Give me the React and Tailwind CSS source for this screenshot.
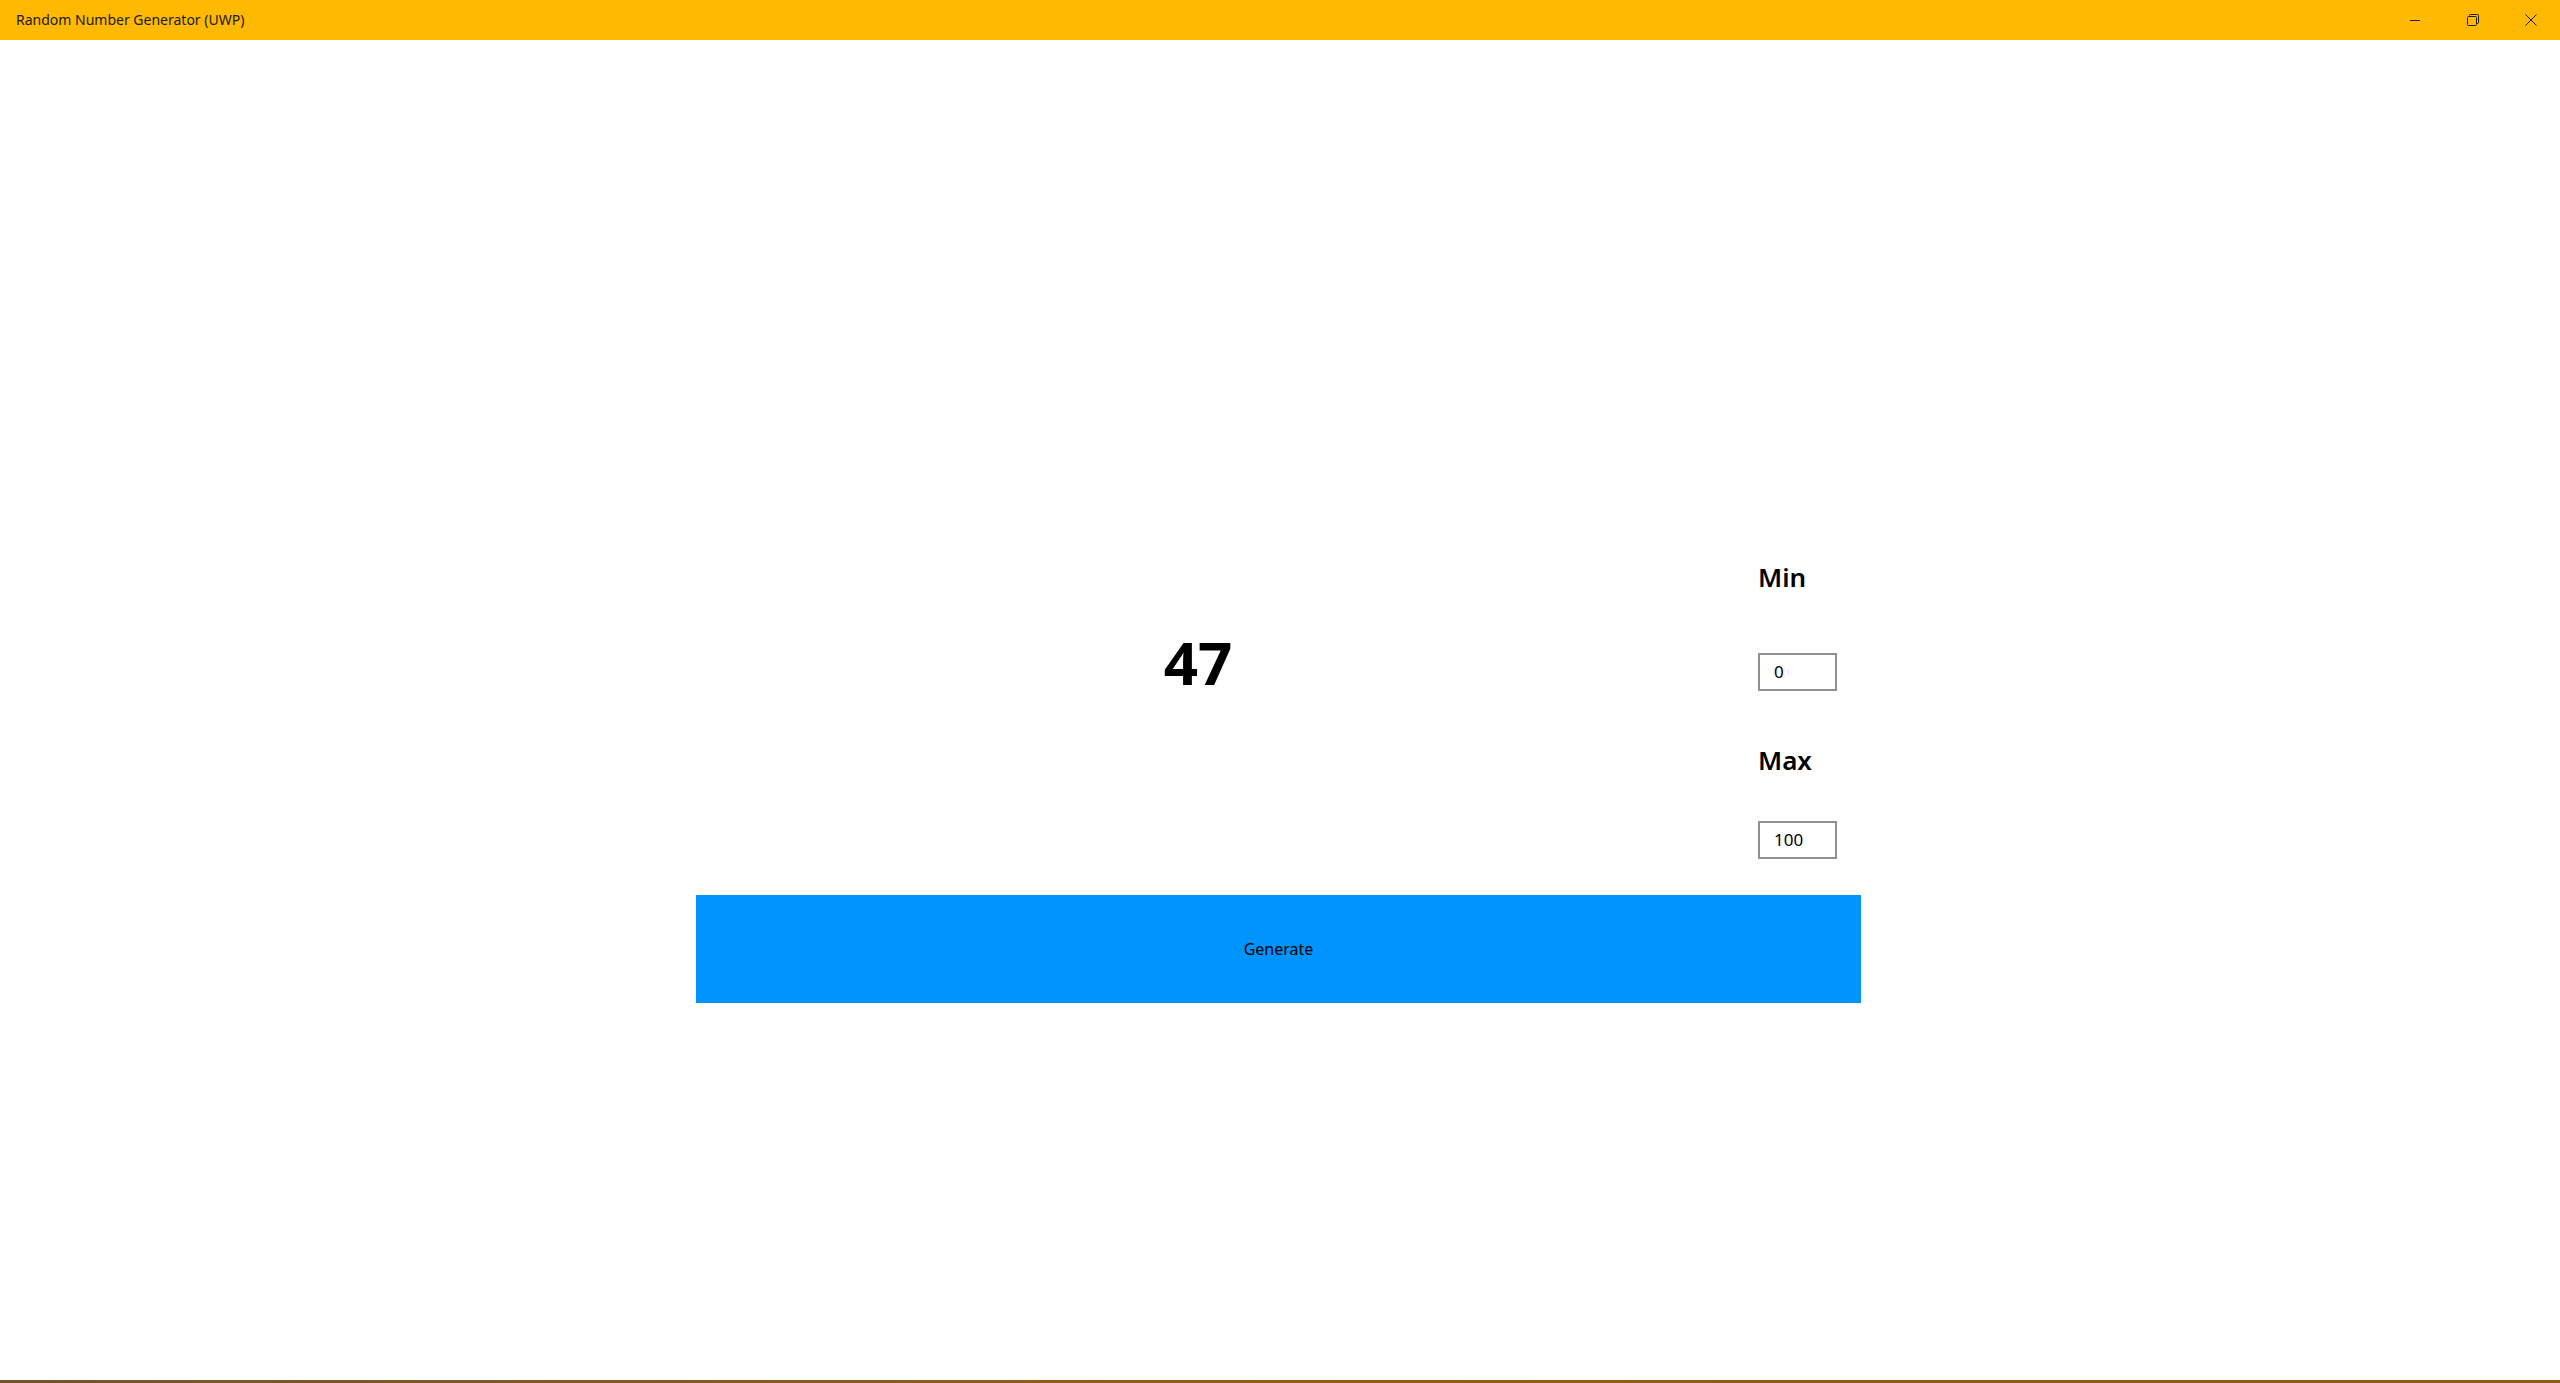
import React from "react";

export default function App() {
  const font = { fontFamily: '"Noto Sans", "Open Sans", sans-serif' };
  return (
    <div className="w-full h-[1383px] flex flex-col bg-white overflow-hidden" style={font}>
      {/* Title bar */}
      <div className="h-[40px] bg-[#FFB900] flex items-center shrink-0">
        <div className="pl-[16px] text-[14px] text-[#1a1a1a] leading-none flex-1">Random Number Generator (UWP)</div>
        <div className="flex h-full">
          <div className="w-[58px] h-full flex items-center justify-center">
            <svg width="10" height="10" viewBox="0 0 10 10"><path d="M0 5.5H10" stroke="#1a1a1a" strokeWidth="1" /></svg>
          </div>
          <div className="w-[58px] h-full flex items-center justify-center">
            <svg width="12" height="12" viewBox="0 0 12 12" fill="none" stroke="#1a1a1a" strokeWidth="1">
              <rect x="0.5" y="2.5" width="9" height="9" rx="1" />
              <path d="M2.5 2.5V1.5a1 1 0 0 1 1-1h7a1 1 0 0 1 1 1v7a1 1 0 0 1-1 1h-1" />
            </svg>
          </div>
          <div className="w-[58px] h-full flex items-center justify-center">
            <svg width="12" height="12" viewBox="0 0 12 12" fill="none" stroke="#1a1a1a" strokeWidth="1">
              <path d="M0.5 0.5L11.5 11.5M11.5 0.5L0.5 11.5" />
            </svg>
          </div>
        </div>
      </div>

      {/* Content */}
      <div className="flex-1 flex flex-col pt-[517px] pl-[696px]">
        <div className="w-[1165px] flex flex-col">
          <div className="flex">
            <div className="flex-1 flex justify-center pt-[75px]">
              <div className="text-[60px] leading-[60px] font-bold text-black">47</div>
            </div>
            <div className="w-[161px] pl-[58px] flex flex-col items-start">
              <div className="text-[26px] leading-[40px] font-semibold text-black">Min</div>
              <div className="mt-[56px] w-[79px] h-[38px] border-2 border-[#8f8f8f] flex items-center pl-[14px] text-[17px] text-black">0</div>
              <div className="mt-[49px] text-[26px] leading-[40px] font-semibold text-black">Max</div>
              <div className="mt-[41px] w-[79px] h-[38px] border-2 border-[#8f8f8f] flex items-center pl-[14px] text-[17px] text-black">100</div>
            </div>
          </div>
          <div className="mt-[36px] h-[108px] bg-[#0094FF] flex items-center justify-center text-[16px] text-black">Generate</div>
        </div>
      </div>

      {/* Bottom border */}
      <div className="h-[3px] shrink-0 bg-gradient-to-r from-[#6e5530] via-[#955c10] to-[#8d5812]" />
    </div>
  );
}
